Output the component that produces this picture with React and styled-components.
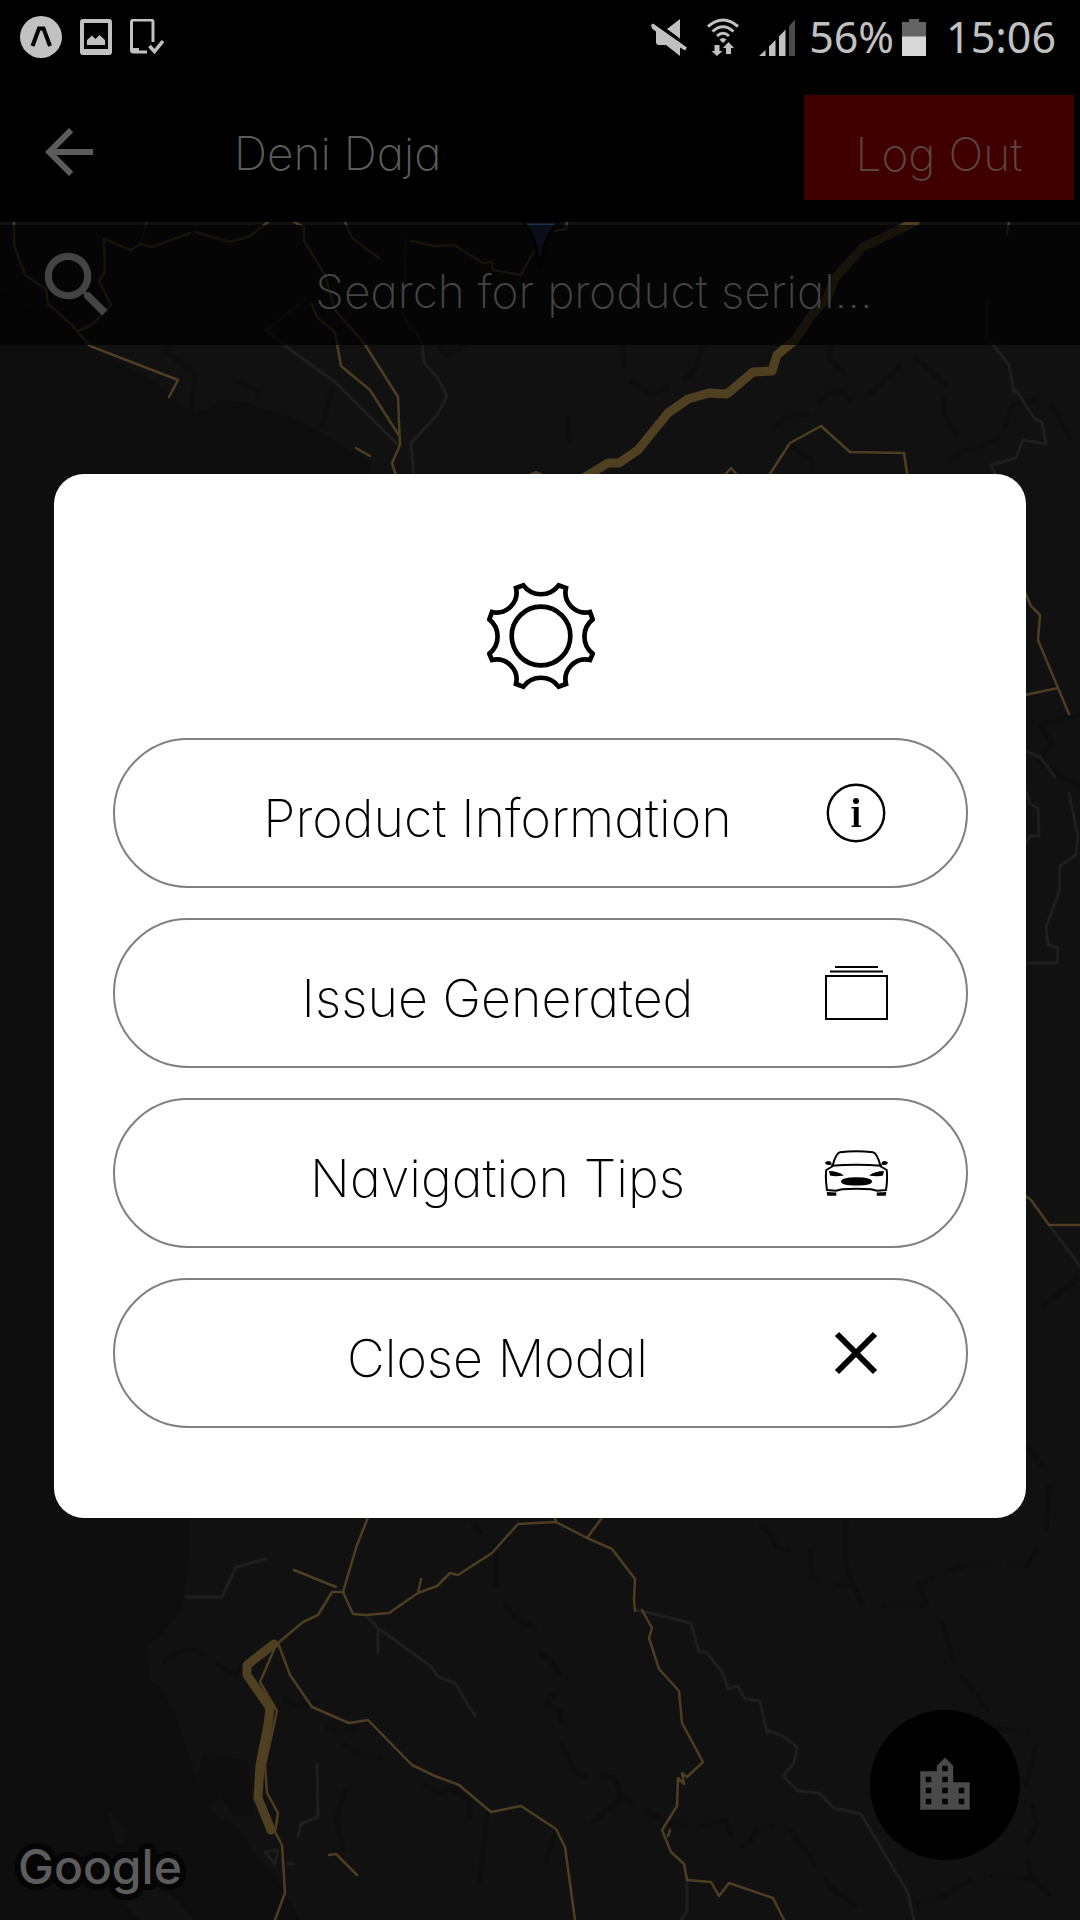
import React from "react";
import styled, { createGlobalStyle } from "styled-components";
import { MdArrowBack, MdSearch, MdLocationCity } from "react-icons/md";

const GlobalStyle = createGlobalStyle`
  *, *::before, *::after { box-sizing: border-box; }
  html, body { margin: 0; background: #000; }
  button, input { font: inherit; color: inherit; border: 0; padding: 0; margin: 0; background: none; }
  svg { display: block; }
`;

const Screen = styled.div`
  position: relative;
  display: flex;
  flex-direction: column;
  min-height: 100vh;
  overflow: hidden;
  background: #0e0e0e;
  font-family: Inter, "Open Sans", sans-serif;
  font-weight: 200;
  font-feature-settings: "cv11", "ss07";
`;

const StatusBar = styled.div`
  position: relative;
  display: flex;
  align-items: center;
  justify-content: space-between;
  height: 72px;
  padding: 2px 24px 0 20px;
  background: #000;
  color: #c1c1c1;
`;

const StatusGroup = styled.div`
  display: flex;
  align-items: center;
  gap: ${(p) => p.$gap}px;
`;

const StatusText = styled.span`
  font-family: "Noto Sans", "Open Sans", sans-serif;
  font-size: 43px;
  line-height: 48px;
  font-weight: 400;
`;

const Header = styled.header`
  position: relative;
  display: flex;
  align-items: center;
  height: 150px;
  padding: 1px 6px 0 33px;
  background: #000;
  font-size: 46px;
  line-height: 54px;
`;

const BackButton = styled.button`
  display: flex;
  padding-top: 8px;
  color: #5c5c5c;
`;

const Title = styled.h1`
  flex: 1;
  margin: 0;
  padding: 10px 0 0 129px;
  font: inherit;
  color: #5c5c5c;
`;

const LogoutButton = styled.button`
  width: 270px;
  height: 105px;
  padding-top: 12px;
  background: #400000;
  color: #5c4444;
`;

const SearchBar = styled.label`
  position: relative;
  display: flex;
  align-items: center;
  height: 120px;
  margin-top: 3px;
  padding-left: 34px;
  background: rgba(0, 0, 0, 0.7);
  color: #444;
  font-size: 46px;
`;

const SearchInput = styled.input`
  flex: 1;
  min-width: 0;
  height: 100%;
  padding: 12px 12px 0 0;
  text-align: center;
  outline: none;
  &::placeholder { color: #444; opacity: 1; }
`;

const MapCanvas = styled.svg`
  position: absolute;
  inset: 222px 0 0 0;
  width: 100%;
  height: calc(100% - 222px);
  fill: none;
  stroke-linejoin: round;
  stroke-linecap: round;
`;

const MapLogo = styled.svg`
  position: absolute;
  left: 12px;
  bottom: 8px;
  font-family: Inter, sans-serif;
  font-size: 48px;
  font-weight: 500;
  paint-order: stroke;
`;

const Fab = styled.button`
  position: absolute;
  right: 60px;
  bottom: 60px;
  display: flex;
  align-items: center;
  justify-content: center;
  width: 150px;
  height: 150px;
  border-radius: 50%;
  background: #010101;
  color: #4a4a4a;
`;

const Overlay = styled.div`
  position: absolute;
  inset: 72px 0 0 0;
  display: flex;
  align-items: center;
  justify-content: center;
`;

const Modal = styled.section`
  display: flex;
  flex-direction: column;
  align-items: center;
  gap: 48px;
  width: 90%;
  padding: 108px 58px 90px 59px;
  border-radius: 30px;
  background: #fff;
  color: #000;
`;

const Actions = styled.div`
  display: flex;
  flex-direction: column;
  gap: 30px;
  width: 100%;
`;

const ActionButton = styled.button`
  display: flex;
  align-items: center;
  height: 150px;
  padding: 0 78px 0 56px;
  border: 2px solid #808080;
  border-radius: 75px;
  font-size: 52px;
  line-height: 62px;
`;

const ActionLabel = styled.span`
  flex: 1;
  padding-top: 12px;
  text-align: center;
`;

const ExpoIcon = () => (
  <svg width="42" height="42" viewBox="0 0 42 42" aria-hidden="true">
    <circle cx="21" cy="21" r="21" fill="#c1c1c1" />
    <path d="M12.500 30l6.500-17.500h4.500L30 30" fill="none" stroke="#000" strokeWidth="4" />
  </svg>
);

const ImageIcon = () => (
  <svg width="32" height="36" viewBox="0 0 32 36" aria-hidden="true">
    <path fill="currentColor" fillRule="evenodd" d="M3 0h26a3 3 0 013 3v30a3 3 0 01-3 3H3a3 3 0 01-3-3V3a3 3 0 013-3zM4 4v26h24V4zM7 26v-5l5-4.500 3.500 3.500 4-4 5.500 5v5z" />
  </svg>
);

const DeviceCheckIcon = () => (
  <svg width="34" height="36" viewBox="0 0 34 36" fill="none" stroke="currentColor" aria-hidden="true">
    <path d="M17 33H3.500a2 2 0 01-2-2V3a2 2 0 012-2H21a2 2 0 012 2v20" strokeWidth="3" />
    <path d="M2 31h7" strokeWidth="4" />
    <path d="M19.500 27l5 5.500L33 22" strokeWidth="3.500" />
  </svg>
);

const MuteIcon = () => (
  <svg width="36" height="37" viewBox="0 0 36 37" aria-hidden="true">
    <path fill="currentColor" d="M29 0v19.500L16 10zM5 12.500L1 9.500 0 6l2-1.500 34 24-2 3-5-3V37L15 26H8q-3 0-3-3z" />
  </svg>
);

const WifiIcon = () => (
  <svg width="32" height="38" viewBox="0 0 32 38" fill="none" stroke="currentColor" aria-hidden="true">
    <path d="M1 8.500q15-13 30 0M5.500 13.500q10.500-9.500 21 0M10 18q6-5.500 12 0" strokeWidth="3" />
    <path fill="currentColor" stroke="none" d="M16 25l-3.500-3.500q3.500-3 7 0zM7.500 27h5v6h3L10 38l-5.500-5h3zM24 36h-5v-6h-3l5.500-6 5.500 6h-3z" />
  </svg>
);

const SignalIcon = () => (
  <svg width="36" height="37" viewBox="0 0 36 37" fill="currentColor" aria-hidden="true">
    <path d="M0 37l6.500-6v6zM10 27.500l6.500-6.500V37H10zM20 17.500l6.500-7V37H20z" />
    <path d="M30 7l6.500-7v37H30z" fill="#4a4a4a" />
  </svg>
);

const BatteryIcon = () => (
  <svg width="24" height="37" viewBox="0 0 24 37" aria-hidden="true">
    <path d="M0 3h7V0h10v3h7v16H0z" fill="#646464" />
    <path d="M0 17.500h24V37H0z" fill="#d8d8d8" />
  </svg>
);

const GearIcon = () => (
  <svg width="108" height="108" viewBox="78 66 324 324" fill="none" stroke="#000" strokeWidth="14" aria-hidden="true">
    <circle cx="240" cy="228" r="88" />
    <path d="M165 84L187 76A66 66 0 00293 76L315 84A60 60 0 00387 156L395 178A66 66 0 00395 281L387 300A60 60 0 00315 372L293 380A66 66 0 00187 380L165 372A60 60 0 0093 300L85 281A66 66 0 0085 178L93 156A60 60 0 00165 84Z" />
  </svg>
);

const InfoIcon = () => (
  <svg width="64" height="64" viewBox="0 0 64 64" aria-hidden="true">
    <circle cx="32" cy="32" r="28.200" fill="none" stroke="#000" strokeWidth="2.400" />
    <circle cx="32" cy="20" r="3" />
    <path d="M27.500 26h7.200v18.400h2.300v1.600h-9.500v-1.600h2.300V27.600h-2.300z" />
  </svg>
);

const StackIcon = () => (
  <svg width="64" height="64" viewBox="0 0 64 64" fill="none" stroke="#000" strokeWidth="2" aria-hidden="true">
    <path d="M2 15h61v43H2zM6 10.500h53M11 6h43" />
  </svg>
);

const CarIcon = () => (
  <svg width="64" height="64" viewBox="0 0 64 64" fill="none" stroke="#000" strokeWidth="2" aria-hidden="true">
    <path d="M8.500 25Q12 12 16 11.300Q32 9 49 11.300Q53 12 56.500 25M7 24.700Q32 23 58 24.700" />
    <path d="M9 25L2.300 29Q1.200 38 3 49L12 49.700L18 48.200Q32 47.500 47 48.200L53 49.700L62 49Q63.800 38 62.700 29L56 25" />
    <path fill="#000" stroke="none" d="M1 22q.5-2 4-2 3 .5 2.500 3.500-5 1.500-6.500-1.500zM64 22q-.5-2-4-2-3 .5-2.500 3.500 5 1.500 6.500-1.500zM5 30q9 0 15 4.500-9 1.500-14 0zM60 30q-9 0-15 4.500 9 1.500 14 0zM2.700 51l9.600.5v3.200H3.300zM62.300 51l-9.600.5v3.200h9zM17 40.500q0-4 15.500-4.200 15.500.2 15.500 4.200t-15.500 4q-15.500 0-15.500-4z" />
  </svg>
);

const CloseIcon = () => (
  <svg width="64" height="64" viewBox="0 0 64 64" stroke="#000" strokeWidth="6" aria-hidden="true">
    <path d="M13 13l38 38M51 13L13 51" />
  </svg>
);

const land = [
  "M0 222H1080V1920H300L270 1868 260 1862 235 1825 218 1818 208 1805 221 1797 235 1816 253 1815 250 1785 247 1761 202 1753 198 1787 196 1775 176 1717 162 1690 149 1678 147 1644 160 1637 181 1610 188 1570 190 1518 370 478 370 460 350 450 300 420 245 402 220 400 210 408 190 412 155 382 90 347 55 328 0 290Z",
  "M107 1808L126 1830 122 1845 115 1840Z",
  "M125 1905L150 1880 175 1898 195 1920H140Z",
];

const darkRoads =
  "M175 300L185 320 166 352 195 373 191 410M332 390L322 426M440 348L447 355 462 348 464 335M625 300L622 340 624 365M703 345L695 370 685 380M632 382L652 394 667 387M915 357L945 384M899 367L870 394M820 403L828 392 842 392 850 400M944 400L943 412 957 436M774 428L785 417 808 414M792 447L812 460 813 470M568 420L569 440M832 345L829 357 844 374M1052 405L1070 438M1005 425L1012 405 1035 400M950 460L965 450 980 447 998 438M238 382L256 390 258 396M1080 715L1040 725 1052 743 1040 760 1056 775 1080 785M165 1661Q182 1645 202 1653M217 1664L236 1676 242 1664M285 1700L300 1706 318 1702M328 1728L340 1732 356 1728M345 1745L362 1756 380 1757M425 1785L440 1793 450 1788 470 1800 470 1817M495 1545L496 1585M505 1603L515 1618 535 1628M472 1520L480 1532M540 1653L550 1660 560 1675M553 1695L547 1703 560 1712 561 1722M562 1745L575 1772 584 1776M602 1777L614 1778 622 1797 592 1823M622 1797L631 1801M647 1811L665 1822 685 1825M702 1826L726 1820 731 1836M742 1846L750 1842 758 1827 772 1827M791 1831L815 1864M825 1880L837 1893 856 1906M761 1526L770 1533 777 1548 788 1549M810 1549L811 1575 818 1581M838 1585L853 1585 863 1606M846 1520L845 1560 853 1585M884 1605H927L918 1585 932 1579M951 1571L968 1565H990M1009 1565H1028L1038 1548M1049 1487L1046 1528M942 1622L953 1660M962 1677L987 1709M998 1729L1027 1732M1036 1747L1026 1785M1032 1805L1037 1825 1027 1842M992 1876L1032 1878 1048 1894M1028 1860L1032 1878M918 1902L940 1898 970 1880M553 1838L546 1862M345 1790L336 1820 344 1850M487 1813L480 1880M1044 1305L1076 1280M1026 1445L1042 1466";

const minorRoads =
  "M147 222L140 244M300 304L266 330 284 345 335 382 398 445M406 240L403 315 422 343 424 363 437 377 447 396 437 415 411 443 414 478M987 300V337L1009 365 1014 393 1016 390 1035 419 1042 422 1046 444 1023 440 1016 458 991 465 997 478M1069 793L1078 836 1076 855 1060 866 1059 892 1046 927 1048 945 1058 948 1057 963H1020M1020 749L1040 757 1055 777M1022 780L1030 804 1038 808 1039 836H1030L1022 850M1049 1225L1080 1266M187 1597H222L236 1567 266 1559M366 1615L378 1628 432 1667 438 1677 455 1683 475 1716M378 1628V1653M317 1764L318 1817 301 1824 298 1837M265 1852L278 1850 275 1864ZM288 1864H294M637 1610L691 1623 699 1652 706 1652 722 1672 728 1689 738 1686 745 1699 760 1701 767 1734 767 1730 783 1736 797 1747 794 1763 783 1776 798 1791 819 1793 834 1808 861 1814 908 1893 914 1920M687 1880V1911L681 1920";

const mainRoads =
  "M14 222V245L25 275 46 289 48 304 72 325 90 346 178 380 169 397M78 331L93 324 111 305 99 281 105 272 104 239 131 250 140 244 152 247 190 233M195 232L230 242 250 236 268 222M294 222L304 227V241L325 275 335 310 364 343 398 397 400 445 392 463 398 482M312 304L317 317 335 332 341 366 370 390 398 434M345 222L352 238 379 258M411 241L435 246 454 245 483 263 492 262 493 270 521 275 534 251M356 448L370 456M555 231L566 229 567 222M1009 222L1007 234M524 478L536 472 548 478M722 478L731 468 740 478M766 480L790 443 821 426 850 452 904 453 908 480M1022 585L1031 606 1040 615 1038 640 1058 688 1069 714M1020 696L1058 688M1020 1192L1031 1200 1049 1225H1080M369 1515L357 1545 343 1592 353 1614 366 1615 389 1613 418 1593 437 1586 450 1573 458 1575 492 1553 518 1524 556 1522 587 1538 612 1549 635 1579 634 1600 635 1611M421 1579L418 1593M294 1570L336 1587M343 1592H332L318 1615 303 1622 278 1643 290 1675 312 1707 349 1723 368 1720 412 1765 435 1776 459 1785 491 1812 521 1806 556 1829 565 1847 575 1920M276 1645L260 1682 277 1711 265 1765 267 1793 278 1813 275 1832 282 1845 285 1893 275 1920M329 1855L336 1854 357 1875M604 1515L587 1538M554 1515L556 1522M642 1610L652 1628 649 1638 659 1669 679 1691 682 1723 703 1762 687 1777 682 1773 684 1784 678 1778 677 1806 662 1830 671 1852 684 1864 687 1880 711 1882 719 1896 729 1883 773 1898 784 1920M670 1830L668 1836";

const highways = [
  { d: "M915 222L863 247 835 278 826 300 813 313 795 340 777 355 772 371 753 372 727 394 709 393 688 399 668 413 638 450 619 463 608 463 580 480", w: 9 },
  { d: "M274 1644L247 1665 247 1675 270 1708 268 1725 260 1765 258 1798 271 1830", w: 9 },
];

const MapView = () => (
  <MapCanvas viewBox="0 222 1080 1698" preserveAspectRatio="xMidYMid slice" aria-hidden="true">
    {land.map((d) => <path key={d} d={d} fill="#111" />)}
    <path d={darkRoads} stroke="#0e0e0e" strokeWidth="5" />
    <path d={minorRoads} stroke="#1e1e1e" strokeWidth="3" />
    <path d={mainRoads} stroke="#4d3e22" strokeWidth="2.500" />
    {highways.map((h) => <path key={h.d} d={h.d} stroke="#4f4022" strokeWidth={h.w} />)}
    <path d="M523 222Q537 236 539 266H541Q543 236 559 222Z" fill="#1f3054" stroke="#060606" strokeWidth="3" />
  </MapCanvas>
);

const actions = [
  { label: "Product Information", Icon: InfoIcon },
  { label: "Issue Generated", Icon: StackIcon },
  { label: "Navigation Tips", Icon: CarIcon },
  { label: "Close Modal", Icon: CloseIcon },
];

export default function App() {
  return (
    <>
      <GlobalStyle />
      <Screen>
        <MapView />
        <StatusBar>
          <StatusGroup $gap={18}>
            <ExpoIcon />
            <ImageIcon />
            <DeviceCheckIcon />
          </StatusGroup>
          <StatusGroup $gap={20}>
            <MuteIcon />
            <WifiIcon />
            <StatusGroup $gap={14}>
              <SignalIcon />
              <StatusGroup $gap={8}>
                <StatusText>56%</StatusText>
                <BatteryIcon />
              </StatusGroup>
            </StatusGroup>
            <StatusText>15:06</StatusText>
          </StatusGroup>
        </StatusBar>
        <Header>
          <BackButton aria-label="Back"><MdArrowBack size={72} /></BackButton>
          <Title>Deni Daja</Title>
          <LogoutButton>Log Out</LogoutButton>
        </Header>
        <SearchBar>
          <MdSearch size={86} />
          <SearchInput type="text" placeholder="Search for product serial..." aria-label="Search for product serial" />
        </SearchBar>
        <MapLogo width="196" height="80" viewBox="0 0 196 80" role="img" aria-label="Google">
          <text x="6" y="52" fill="#5c5c5c" stroke="#050505" strokeWidth="12" strokeLinejoin="round">Google</text>
        </MapLogo>
        <Fab aria-label="Buildings"><MdLocationCity size={66} /></Fab>
        <Overlay>
          <Modal role="dialog" aria-label="Options">
            <GearIcon />
            <Actions>
              {actions.map(({ label, Icon }) => (
                <ActionButton key={label}>
                  <ActionLabel>{label}</ActionLabel>
                  <Icon />
                </ActionButton>
              ))}
            </Actions>
          </Modal>
        </Overlay>
      </Screen>
    </>
  );
}
